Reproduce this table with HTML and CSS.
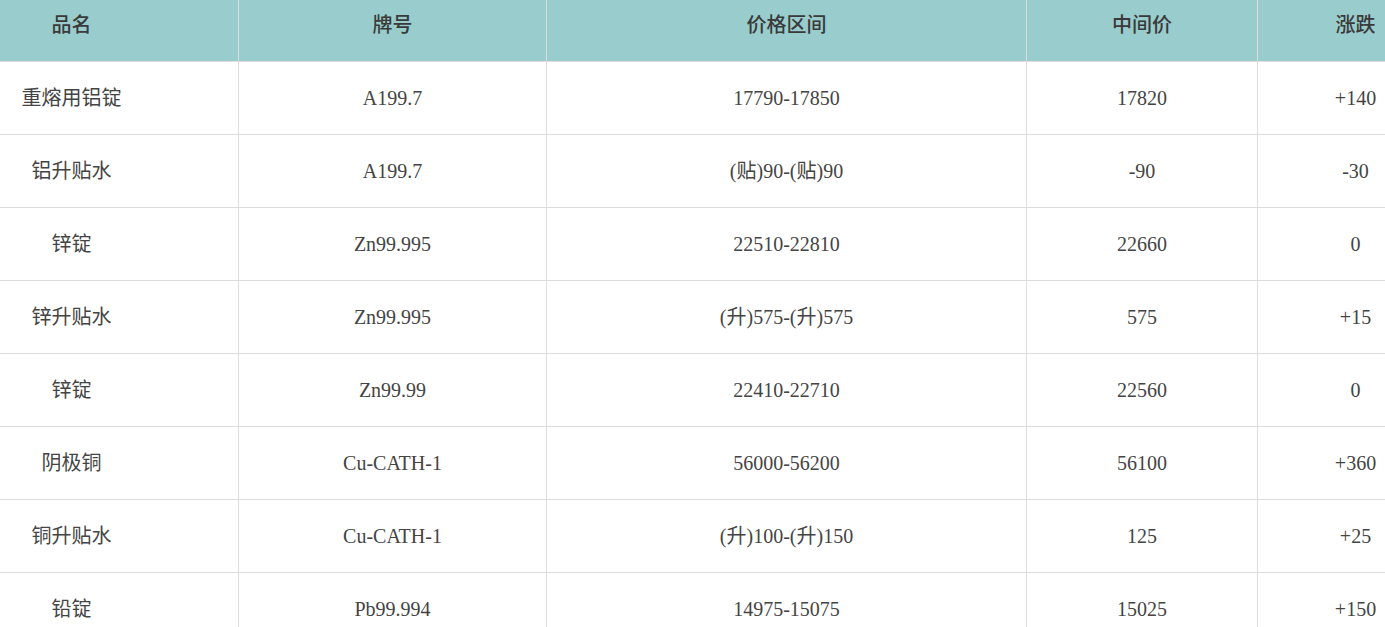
FILE: index.html
```html
<!DOCTYPE html>
<html lang="zh-CN">
<head>
<meta charset="utf-8">
<title>价格表</title>
<link rel="stylesheet" href="styles.css">
</head>
<body>
<div class="viewport">
<table class="price-table">
  <colgroup>
    <col class="c-name">
    <col class="c-grade">
    <col class="c-range">
    <col class="c-mid">
    <col class="c-change">
  </colgroup>
  <thead>
    <tr><th>品名</th><th>牌号</th><th>价格区间</th><th>中间价</th><th>涨跌</th></tr>
  </thead>
  <tbody>
    <tr><td>重熔用铝锭</td><td>A199.7</td><td>17790-17850</td><td>17820</td><td>+140</td></tr>
    <tr><td>铝升贴水</td><td>A199.7</td><td>(贴)90-(贴)90</td><td>-90</td><td>-30</td></tr>
    <tr><td>锌锭</td><td>Zn99.995</td><td>22510-22810</td><td>22660</td><td>0</td></tr>
    <tr><td>锌升贴水</td><td>Zn99.995</td><td>(升)575-(升)575</td><td>575</td><td>+15</td></tr>
    <tr><td>锌锭</td><td>Zn99.99</td><td>22410-22710</td><td>22560</td><td>0</td></tr>
    <tr><td>阴极铜</td><td>Cu-CATH-1</td><td>56000-56200</td><td>56100</td><td>+360</td></tr>
    <tr><td>铜升贴水</td><td>Cu-CATH-1</td><td>(升)100-(升)150</td><td>125</td><td>+25</td></tr>
    <tr><td>铅锭</td><td>Pb99.994</td><td>14975-15075</td><td>15025</td><td>+150</td></tr>
  </tbody>
</table>
</div>
</body>
</html>
```

FILE: styles.css
```css
html, body {
  margin: 0;
  padding: 0;
  background: #ffffff;
  overflow: hidden;
}

.viewport {
  width: 1385px;
  overflow: hidden;
}

.price-table {
  margin-left: -96px;
  width: 1549px;
  table-layout: fixed;
  border-collapse: collapse;
  font-family: "Liberation Serif", "Noto Sans CJK SC", serif;
  font-size: 20px;
  color: #444444;
}

.c-name { width: 334px; }
.c-grade { width: 308px; }
.c-range { width: 480px; }
.c-mid { width: 231px; }
.c-change { width: 196px; }

.price-table th {
  height: 61px;
  padding: 14px 0 0;
  box-sizing: border-box;
  vertical-align: top;
  background: #99cccc;
  color: #3a3a3a;
  font-weight: 500;
  line-height: 22px;
  text-align: center;
  border-left: 1px solid #dddddd;
  border-right: 1px solid #dddddd;
  border-bottom: 1px solid #dddddd;
}

.price-table td {
  height: 73px;
  padding: 1px 0 0;
  box-sizing: border-box;
  text-align: center;
  vertical-align: middle;
  line-height: 22px;
  border: 1px solid #dddddd;
}
```
